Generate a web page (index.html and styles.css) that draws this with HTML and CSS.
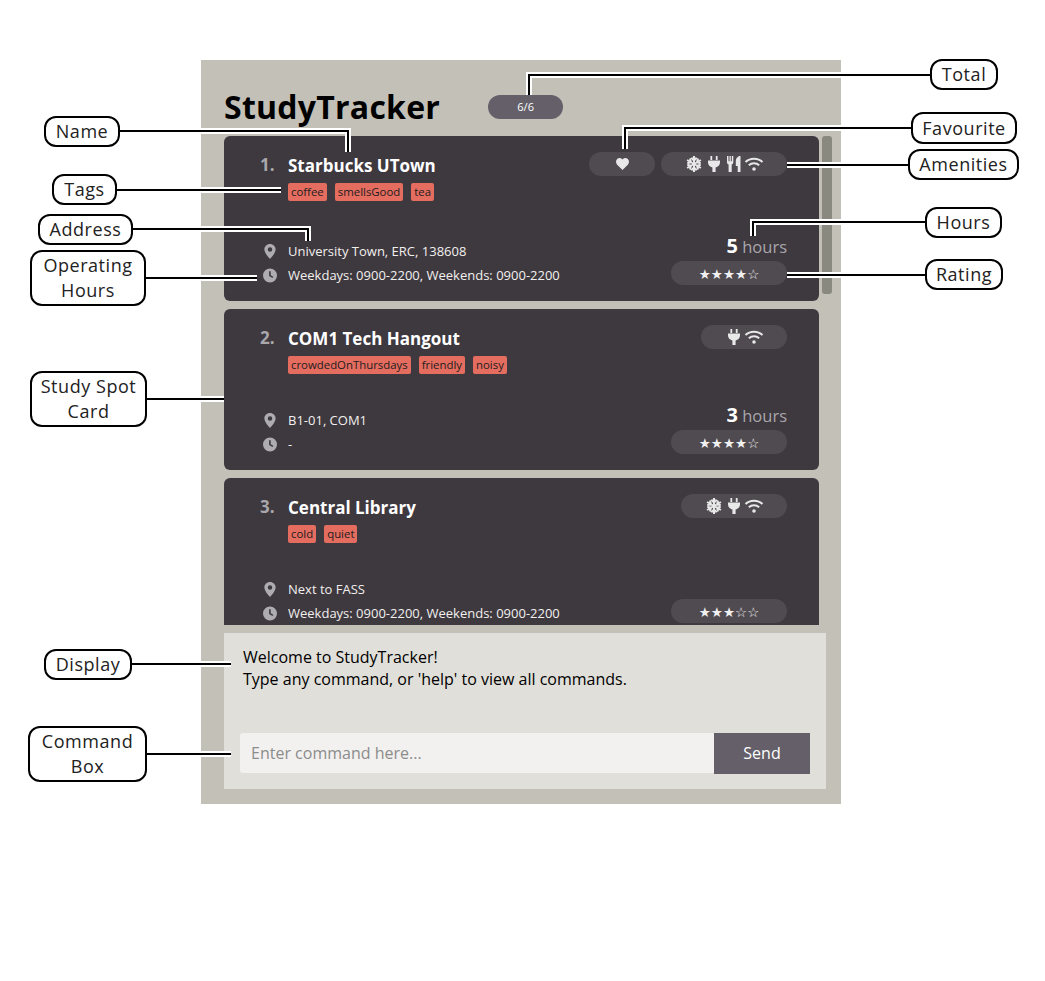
FILE: index.html
```html
<!DOCTYPE html>
<html lang="en">
<head>
  <meta charset="UTF-8" />
  <title>StudyTracker - User Guide Diagram</title>
  <link rel="stylesheet" href="styles.css">
</head>
<body>
  <svg class="icon-defs" width="0" height="0">
    <symbol id="i-marker" viewBox="0 0 12 16">
      <path fill-rule="evenodd" d="M6 0C2.7 0 0 2.6 0 5.8 0 9.8 6 16 6 16s6-6.2 6-10.2C12 2.6 9.3 0 6 0zm0 8.2a2.4 2.4 0 1 1 0-4.8 2.4 2.4 0 0 1 0 4.8z"/>
    </symbol>
    <symbol id="i-clock" viewBox="0 0 14 14">
      <path fill-rule="evenodd" d="M7 0a7 7 0 1 0 0 14A7 7 0 0 0 7 0zM6.1 2.8h1.6v3.9l2.6 1.6-.8 1.3-3.4-2.1z"/>
    </symbol>
    <symbol id="i-heart" viewBox="0 0 14 13">
      <path d="M7 13 1.2 7.2C-.4 5.600-.4 3 1 1.400 2.500-.2 5-.3 6.500 1.100L7 1.600l.5-.5C9-.3 11.500-.2 13 1.400c1.400 1.600 1.400 4.200-.2 5.800z"/>
    </symbol>
    <symbol id="i-snow" viewBox="0 0 16 16">
      <g fill="none" stroke="currentColor" stroke-width="2">
        <path id="snow-arm" d="M8 0v16M5.300 1.800 8 4.500l2.700-2.700M5.300 14.200 8 11.500l2.700 2.700"/>
        <use href="#snow-arm" transform="rotate(60 8 8)"/>
        <use href="#snow-arm" transform="rotate(120 8 8)"/>
      </g>
    </symbol>
    <symbol id="i-plug" viewBox="0 0 12 16">
      <path d="M2.400 0h1.800v4H2.400zM7.800 0h1.800v4H7.800zM0 4.500h12v2c0 2.700-1.900 4.400-4.400 4.900V16H4.400v-4.600C1.900 10.900 0 9.200 0 6.500z"/>
    </symbol>
    <symbol id="i-food" viewBox="0 0 14 16">
      <path d="M0 0h1.500v5.200h1V0h1.300v5.200h1V0h1.500v6.300c0 1.200-.7 2-1.600 2.300V16H1.600V8.600C.7 8.300 0 7.500 0 6.300zM13.500 0v16h-2.800v-6H8.800V5c0-3 2.400-5 4.700-5z"/>
    </symbol>
    <symbol id="i-wifi" viewBox="-.5 0 20 14">
      <g fill="none" stroke="currentColor" stroke-width="2">
        <path d="M1 5C5.500.700 13.500.700 18 5"/>
        <path d="M4.300 8.300c3-2.600 7.400-2.600 10.400 0"/>
      </g>
      <circle cx="9.500" cy="12" r="1.800"/>
    </symbol>
  </svg>

  <div class="panel">
    <header class="app-header">
      <h1 class="app-title">StudyTracker</h1>
      <span class="total-pill">6/6</span>
    </header>

    <div class="list-wrap">
      <div class="card-list">

        <article class="card card-tall">
          <div class="card-top">
            <span class="card-index">1.</span>
            <div class="card-heading">
              <h2 class="card-name">Starbucks UTown</h2>
              <div class="tags">
                <span class="tag">coffee</span>
                <span class="tag">smellsGood</span>
                <span class="tag">tea</span>
              </div>
            </div>
            <div class="card-pills">
              <span class="pill pill-fav"><svg class="ic-heart"><use href="#i-heart"/></svg></span>
              <span class="pill pill-amen">
                <svg class="ic"><use href="#i-snow"/></svg>
                <svg class="ic"><use href="#i-plug"/></svg>
                <svg class="ic"><use href="#i-food"/></svg>
                <svg class="ic"><use href="#i-wifi"/></svg>
              </span>
            </div>
          </div>
          <div class="card-bottom">
            <div class="info">
              <div class="info-row"><svg class="ic-info"><use href="#i-marker"/></svg><span>University Town, ERC, 138608</span></div>
              <div class="info-row"><svg class="ic-info"><use href="#i-clock"/></svg><span>Weekdays: 0900-2200, Weekends: 0900-2200</span></div>
            </div>
            <div class="stats">
              <div class="hours"><b>5</b> hours</div>
              <div class="pill rating">★★★★☆</div>
            </div>
          </div>
        </article>

        <article class="card">
          <div class="card-top">
            <span class="card-index">2.</span>
            <div class="card-heading">
              <h2 class="card-name">COM1 Tech Hangout</h2>
              <div class="tags">
                <span class="tag">crowdedOnThursdays</span>
                <span class="tag">friendly</span>
                <span class="tag">noisy</span>
              </div>
            </div>
            <div class="card-pills">
              <span class="pill pill-amen">
                <svg class="ic"><use href="#i-plug"/></svg>
                <svg class="ic"><use href="#i-wifi"/></svg>
              </span>
            </div>
          </div>
          <div class="card-bottom">
            <div class="info">
              <div class="info-row"><svg class="ic-info"><use href="#i-marker"/></svg><span>B1-01, COM1</span></div>
              <div class="info-row"><svg class="ic-info"><use href="#i-clock"/></svg><span>-</span></div>
            </div>
            <div class="stats">
              <div class="hours"><b>3</b> hours</div>
              <div class="pill rating">★★★★☆</div>
            </div>
          </div>
        </article>

        <article class="card">
          <div class="card-top">
            <span class="card-index">3.</span>
            <div class="card-heading">
              <h2 class="card-name">Central Library</h2>
              <div class="tags">
                <span class="tag">cold</span>
                <span class="tag">quiet</span>
              </div>
            </div>
            <div class="card-pills">
              <span class="pill pill-amen">
                <svg class="ic"><use href="#i-snow"/></svg>
                <svg class="ic"><use href="#i-plug"/></svg>
                <svg class="ic"><use href="#i-wifi"/></svg>
              </span>
            </div>
          </div>
          <div class="card-bottom">
            <div class="info">
              <div class="info-row"><svg class="ic-info"><use href="#i-marker"/></svg><span>Next to FASS</span></div>
              <div class="info-row"><svg class="ic-info"><use href="#i-clock"/></svg><span>Weekdays: 0900-2200, Weekends: 0900-2200</span></div>
            </div>
            <div class="stats">
              <div class="pill rating">★★★☆☆</div>
            </div>
          </div>
        </article>

      </div>
      <div class="scrollbar"></div>
    </div>

    <section class="display">
      <p class="display-text">Welcome to StudyTracker!<br>Type any command, or 'help' to view all commands.</p>
      <form class="command-box">
        <input class="command-input" type="text" placeholder="Enter command here...">
        <button class="send-btn" type="button">Send</button>
      </form>
    </section>
  </div>

  <!-- annotation leaders, drawn over the app window -->
  <svg class="leaders" width="1045" height="981">
    <g class="leader-casing">
      <path id="l-total" d="M930 75H529V95"/>
      <path id="l-name" d="M120 131H348V152"/>
      <path id="l-tags" d="M117 190H281"/>
      <path id="l-address" d="M133 229H308V241"/>
      <path id="l-hours-op" d="M146 278H257"/>
      <path id="l-card" d="M147 399H224"/>
      <path id="l-display" d="M132 664H231"/>
      <path id="l-command" d="M147 754H231"/>
      <path id="l-fav" d="M911 128H625V149"/>
      <path id="l-amen" d="M908 165H787"/>
      <path id="l-hours" d="M925 222H753V236"/>
      <path id="l-rating" d="M925 275H787"/>
    </g>
    <g class="leader-line">
      <use href="#l-total"/><use href="#l-name"/><use href="#l-tags"/><use href="#l-address"/>
      <use href="#l-hours-op"/><use href="#l-card"/><use href="#l-display"/><use href="#l-command"/>
      <use href="#l-fav"/><use href="#l-amen"/><use href="#l-hours"/><use href="#l-rating"/>
    </g>
  </svg>

  <div class="callout c-total">Total</div>
  <div class="callout c-name">Name</div>
  <div class="callout c-tags">Tags</div>
  <div class="callout c-address">Address</div>
  <div class="callout c-operating">Operating<br>Hours</div>
  <div class="callout c-card">Study Spot<br>Card</div>
  <div class="callout c-display">Display</div>
  <div class="callout c-command">Command<br>Box</div>
  <div class="callout c-fav">Favourite</div>
  <div class="callout c-amen">Amenities</div>
  <div class="callout c-hours">Hours</div>
  <div class="callout c-rating">Rating</div>
</body>
</html>
```

FILE: styles.css
```css
body {
  margin: 0;
  width: 1045px;
  height: 981px;
  position: relative;
  overflow: hidden;
  background: white;
  font-family: "Open Sans", sans-serif;
}

.icon-defs {
  position: absolute;
}

.panel {
  position: absolute;
  left: 201px;
  top: 60px;
  width: 640px;
  height: 744px;
  box-sizing: border-box;
  padding: 28px 15px 15px 23px;
  background: #c3c0b8;
  display: flex;
  flex-direction: column;
}

.app-header {
  display: flex;
  align-items: center;
  height: 38px;
  gap: 48px;
  margin-bottom: 10px;
}

.app-title {
  margin: 0;
  font-size: 32px;
  font-weight: 700;
  letter-spacing: 0.25px;
  color: black;
  line-height: 38px;
}

.total-pill {
  width: 75px;
  height: 24px;
  border-radius: 12px;
  background: #645f69;
  color: white;
  font-size: 11px;
  line-height: 24px;
  text-align: center;
}

.list-wrap {
  display: flex;
  gap: 3px;
  height: 489px;
  margin-bottom: 8px;
}

.card-list {
  flex: none;
  width: 595px;
  height: 489px;
  overflow: hidden;
  display: flex;
  flex-direction: column;
  gap: 8px;
}

.scrollbar {
  flex: none;
  width: 10px;
  height: 158px;
  border-radius: 3px;
  background: #8a897f;
}

.card {
  flex: none;
  height: 161px;
  box-sizing: border-box;
  padding: 16px 32px 16px 36px;
  background: #3e383f;
  border-radius: 6px;
  display: flex;
  flex-direction: column;
  justify-content: space-between;
}

.card-tall {
  height: 165px;
}

.card-top {
  display: flex;
  align-items: flex-start;
}

.card-index {
  width: 28px;
  font-size: 17px;
  font-weight: 700;
  line-height: 26px;
  color: #a9a7ab;
}

.card-heading {
  flex: 1;
}

.card-name {
  margin: 0 0 4px;
  padding-top: 1px;
  font-size: 17px;
  font-weight: 700;
  line-height: 26px;
  color: white;
}

.tags {
  display: flex;
  gap: 8px;
}

.tag {
  height: 18px;
  padding: 0 3px;
  border-radius: 2px;
  background: #e56d5f;
  color: #231c1e;
  font-size: 11.4px;
  line-height: 18px;
}

.card-pills {
  display: flex;
  gap: 6px;
}

.pill {
  height: 24px;
  border-radius: 12px;
  background: #504b51;
  color: #e8e8e8;
  fill: currentColor;
  display: flex;
  align-items: center;
  justify-content: center;
}

.pill-fav {
  width: 66px;
}

.pill-amen {
  padding: 0 23px;
}

.ic {
  width: 20px;
  height: 16px;
}

.ic-heart {
  width: 13px;
  height: 12px;
}

.card-bottom {
  display: flex;
  align-items: flex-end;
  justify-content: space-between;
}

.info {
  display: flex;
  flex-direction: column;
  gap: 6px;
  padding-bottom: 1px;
}

.info-row {
  display: flex;
  align-items: center;
  height: 18px;
  font-size: 13px;
  color: #f2f0ee;
}

.ic-info {
  width: 14px;
  height: 15px;
  margin-left: 3px;
  margin-right: 11px;
  fill: #aeacb0;
}

.stats {
  display: flex;
  flex-direction: column;
  align-items: flex-end;
  gap: 2px;
}

.hours {
  font-size: 16.5px;
  line-height: 24px;
  color: #a9a7ab;
}

.hours b {
  font-size: 20px;
  color: white;
}

.rating {
  width: 116px;
  box-sizing: border-box;
  padding-top: 1px;
  font-family: "DejaVu Sans", sans-serif;
  font-size: 13.5px;
  color: #f0f0f0;
}

.display {
  width: 602px;
  height: 156px;
  box-sizing: border-box;
  padding: 13px 16px 15px 16px;
  background: #e0dfd9;
  display: flex;
  flex-direction: column;
  justify-content: space-between;
}

.display-text {
  margin: 0 0 0 3px;
  font-size: 16px;
  line-height: 22px;
  color: black;
}

.command-box {
  display: flex;
  height: 41px;
}

.command-input {
  flex: 1;
  height: 40px;
  box-sizing: border-box;
  padding: 0 11px;
  border: none;
  border-radius: 3px 0 0 3px;
  background: #f2f1ef;
  font-family: inherit;
  font-size: 16px;
}

.command-input::placeholder {
  color: #8c8c8c;
  opacity: 1;
}

.send-btn {
  width: 96px;
  padding: 0 0 2px;
  border: none;
  background: #645f69;
  color: white;
  font-family: inherit;
  font-size: 16px;
}

/* annotations */
.leaders {
  position: absolute;
  left: 0;
  top: 0;
  fill: none;
}

.leader-casing {
  stroke: white;
  stroke-width: 6;
}

.leader-line {
  stroke: black;
  stroke-width: 2;
}

.callout {
  position: absolute;
  box-sizing: border-box;
  border: 2px solid black;
  border-radius: 12px;
  background: white;
  color: #222;
  font-size: 18px;
  letter-spacing: 0.55px;
  line-height: 25px;
  text-align: center;
  display: flex;
  align-items: center;
  justify-content: center;
}

.c-total { left: 930px; top: 59px; width: 68px; height: 31px; }
.c-name { left: 44px; top: 116px; width: 76px; height: 31px; }
.c-tags { left: 52px; top: 174px; width: 65px; height: 31px; }
.c-address { left: 38px; top: 214px; width: 95px; height: 31px; }
.c-operating { left: 30px; top: 250px; width: 116px; height: 56px; }
.c-card { left: 30px; top: 371px; width: 117px; height: 56px; }
.c-display { left: 44px; top: 649px; width: 88px; height: 31px; }
.c-command { left: 28px; top: 726px; width: 119px; height: 56px; }
.c-fav { left: 911px; top: 112px; width: 106px; height: 32px; }
.c-amen { left: 908px; top: 149px; width: 111px; height: 31px; }
.c-hours { left: 925px; top: 207px; width: 77px; height: 31px; }
.c-rating { left: 925px; top: 259px; width: 78px; height: 31px; }
```
